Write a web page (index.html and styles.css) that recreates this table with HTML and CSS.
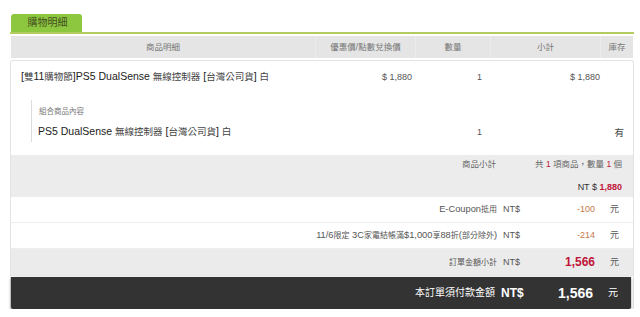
FILE: index.html
```html
<!DOCTYPE html>
<html lang="zh-Hant">
<head>
<meta charset="utf-8">
<title>購物明細</title>
<link rel="stylesheet" href="styles.css">
</head>
<body>
<div class="wrap">
  <div class="tabs"><div class="tab">購物明細</div></div>
  <div class="head">
    <div>商品明細</div>
    <div>優惠價/點數兌換價</div>
    <div>數量</div>
    <div>小計</div>
    <div>庫存</div>
  </div>
  <div class="box">
    <div class="item">
      <div class="name">[<span class="zh">雙</span>11<span class="zh">購物節</span>]PS5 DualSense <span class="zh">無線控制器</span> [<span class="zh">台灣公司貨</span>] <span class="zh">白</span></div>
      <div class="price">$ 1,880</div>
      <div class="qty">1</div>
      <div class="sub">$ 1,880</div>
      <div class="stock"></div>
    </div>
    <div class="bundle">
      <div class="blabel">組合商品內容</div>
      <div class="bfill"></div>
      <div class="bname name">PS5 DualSense <span class="zh">無線控制器</span> [<span class="zh">台灣公司貨</span>] <span class="zh">白</span></div>
      <div class="price"></div>
      <div class="qty bq">1</div>
      <div class="sub"></div>
      <div class="stock bq">有</div>
    </div>
    <div class="summary">
      <div class="sline">
        <div class="slabel">商品小計</div>
        <div class="sval">共 <b class="red">1</b> 項商品，數量 <b class="red">1</b> 個</div>
      </div>
      <div class="stotal">NT $ <b class="red">1,880</b></div>
    </div>
    <div class="row">
      <div class="rlabel">E-Coupon<span class="zh">抵用</span></div>
      <div class="cur">NT$</div>
      <div class="amt neg">-100</div>
      <div class="unit">元</div>
    </div>
    <div class="row">
      <div class="rlabel">11/6<span class="zh">限定</span> 3C<span class="zh">家電結帳滿</span>$1,000<span class="zh">享</span>88<span class="zh">折</span>(<span class="zh">部分除外</span>)</div>
      <div class="cur">NT$</div>
      <div class="amt neg">-214</div>
      <div class="unit">元</div>
    </div>
    <div class="row grey">
      <div class="rlabel"><span class="zh">訂單金額小計</span></div>
      <div class="cur">NT$</div>
      <div class="amt red big">1,566</div>
      <div class="unit">元</div>
    </div>
    <div class="row total">
      <div class="rlabel">本訂單須付款金額</div>
      <div class="cur">NT$</div>
      <div class="amt">1,566</div>
      <div class="unit">元</div>
    </div>
  </div>
</div>
</body>
</html>
```

FILE: styles.css
```css
* { box-sizing: border-box; }
html, body { margin: 0; padding: 0; background: #fff; }
body {
  font-family: "Liberation Sans", "Noto Sans CJK TC", sans-serif;
  color: #333;
  padding-top: 14px;
}
.wrap {
  margin-left: 10px;
  width: 624px;
}
.tabs {
  padding-left: 1px;
  border-bottom: 2px solid #b2cc62;
  display: flex;
}
.tab {
  width: 71px;
  height: 18px;
  background: #8dc63f;
  border-radius: 3px 3px 0 0;
  color: #44511f;
  font-size: 10px;
  line-height: 18px;
  text-align: center;
  padding-left: 2px;
}
.head {
  margin: 2px 1px 0;
  height: 22px;
  background: #e5e5e5;
  display: grid;
  grid-template-columns: 304px 100px 75px 110px 1fr;
  font-size: 8.5px;
  color: #777;
  line-height: 22px;
  text-align: center;
}
.head > div + div { border-left: 1px solid #ececec; }
.box {
  margin-top: 2px;
  border: 1px solid #e3e3e3;
  border-bottom: none;
  border-radius: 3px 3px 0 0;
}
.item, .bundle {
  display: grid;
  grid-template-columns: 304px 100px 75px 110px 1fr;
  align-items: center;
}
.item { padding: 9px 0 17px; line-height: 12px; }
.name { font-size: 10.5px; color: #222; padding-left: 10px; white-space: nowrap; }
.name .zh { font-size: 9.5px; color: #444; }
.price, .qty, .sub, .stock { text-align: right; font-size: 9px; color: #555; }
.price { padding-right: 3px; }
.qty { padding-right: 8px; }
.stock { padding-right: 9px; }
.stock.bq { font-size: 9.5px; color: #444; }
.bundle { margin-bottom: 13px; }
.blabel {
  grid-column: 1;
  margin-left: 20px;
  border-left: 1px solid #dcdcdc;
  padding: 6px 0 0 7px;
  font-size: 7.5px;
  color: #777;
  line-height: 12px;
}
.bfill { grid-column: 2 / 6; }
.bname {
  grid-column: 1;
  margin-left: 20px;
  border-left: 1px solid #dcdcdc;
  padding: 6px 0 3px 6px;
  line-height: 14px;
}
.bq { padding-top: 3px; }
.summary {
  background: #ececec;
  padding: 3px 11px 4px 0;
  font-size: 8.5px;
  color: #666;
}
.sline { display: flex; line-height: 12px; }
.slabel { flex: 1; text-align: right; }
.sval { width: 126px; text-align: right; }
.stotal { margin-top: 11px; line-height: 12px; text-align: right; font-size: 9px; color: #333; }
.red { color: #bf1538; }
.sval b { font-weight: normal; }
.stotal b { font-weight: bold; }
.row {
  display: grid;
  grid-template-columns: 1fr 36px 62px 38px;
  line-height: 25px;
  border-bottom: 1px solid #eee;
  font-size: 9.3px;
  color: #555;
}
.row .zh { font-size: 8px; }
.rlabel { text-align: right; white-space: nowrap; }
.cur { padding-left: 6px; font-size: 9px; }
.amt { text-align: right; font-size: 9px; }
.amt.neg { color: #c5784c; }
.amt.big { font-size: 12px; font-weight: bold; }
.unit { padding-left: 15px; font-size: 9px; }
.row.grey { background: #ebebeb; line-height: 27px; border-bottom: 1px solid #fff; }
.row.total {
  background: #333;
  color: #fff;
  line-height: 32px;
  border-bottom: none;
  margin-right: 2px;
  border-radius: 0 0 2px 2px;
  box-shadow: 0 1px 3px rgba(0,0,0,0.45);
  font-size: 10px;
}
.row.total .cur { font-size: 12px; font-weight: bold; }
.row.total .amt { font-size: 14px; font-weight: bold; }
.row.total .unit { font-size: 10px; }
```
